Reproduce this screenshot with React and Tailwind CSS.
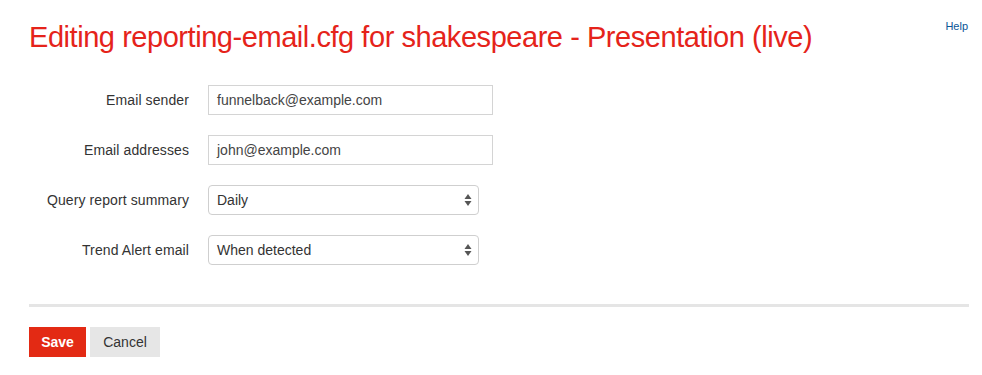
export default function App() {
  const font = { fontFamily: '"Liberation Sans", Arial, sans-serif' };
  const Arrows = () => (
    <svg width="8" height="14" viewBox="0 0 8 14" className="absolute right-[6px] top-1/2 -translate-y-1/2">
      <path d="M4 1 L7.5 6 L0.5 6 Z" fill="#555" />
      <path d="M4 13 L7.5 8 L0.5 8 Z" fill="#555" />
    </svg>
  );
  return (
    <div className="w-[982px] h-[375px] bg-white text-[#333] relative" style={font}>
      <a className="absolute right-[14px] top-[18px] text-[11px] text-[#0b5596]">Help</a>
      <div className="pl-[29px] pr-[13px] pt-[19px]">
        <h1 className="text-[29px] tracking-[-0.45px] leading-[36px] text-[#e5231a] font-normal">
          Editing reporting-email.cfg for shakespeare - Presentation (live)
        </h1>
        <div className="mt-[30px] flex flex-col gap-[20px]">
          <div className="flex items-center">
            <label className="w-[160px] text-right text-[14px] tracking-[0.1px]">Email sender</label>
            <div className="ml-[19px] w-[285px] h-[30px] border border-[#d4d4d4] flex items-center px-[8px] text-[14px] text-[#444]">
              funnelback@example.com
            </div>
          </div>
          <div className="flex items-center">
            <label className="w-[160px] text-right text-[14px] tracking-[0.1px]">Email addresses</label>
            <div className="ml-[19px] w-[285px] h-[30px] border border-[#d4d4d4] flex items-center px-[8px] text-[14px] text-[#444]">
              john@example.com
            </div>
          </div>
          <div className="flex items-center">
            <label className="w-[160px] text-right text-[14px] tracking-[0.1px]">Query report summary</label>
            <div className="relative ml-[19px] w-[271px] h-[30px] border border-[#cfcfcf] rounded-[4px] flex items-center px-[8px] text-[14px] text-[#333]">
              Daily
              <Arrows />
            </div>
          </div>
          <div className="flex items-center">
            <label className="w-[160px] text-right text-[14px] tracking-[0.1px]">Trend Alert email</label>
            <div className="relative ml-[19px] w-[271px] h-[30px] border border-[#cfcfcf] rounded-[4px] flex items-center px-[8px] text-[14px] text-[#333]">
              When detected
              <Arrows />
            </div>
          </div>
        </div>
        <div className="mt-[39px] h-[3px] bg-[#e5e5e5]" />
        <div className="mt-[20px] flex gap-[4px]">
          <button className="w-[57px] h-[30px] bg-[#e32a14] text-white font-bold text-[14px]">Save</button>
          <button className="w-[70px] h-[30px] bg-[#e6e6e6] text-[#333] text-[14px]">Cancel</button>
        </div>
      </div>
    </div>
  );
}
